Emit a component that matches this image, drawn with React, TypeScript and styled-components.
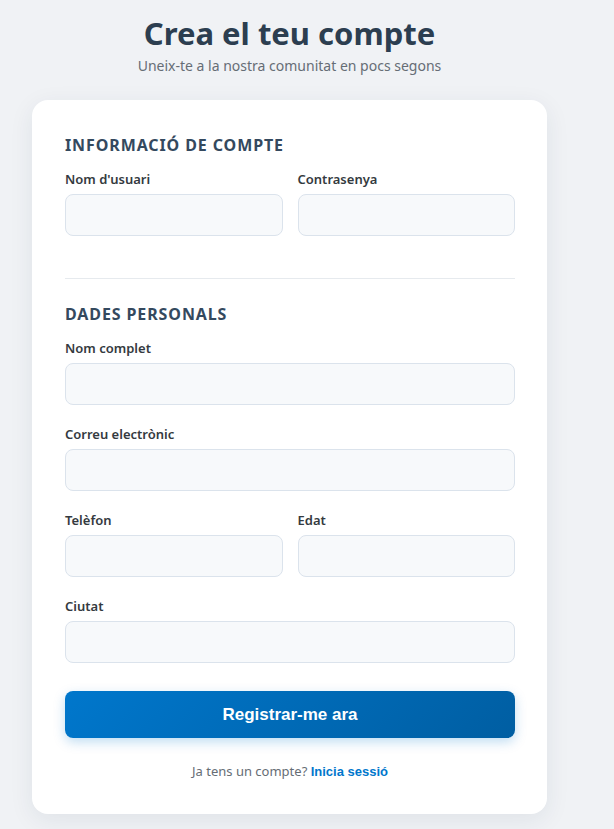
import React from "react"
import styled, { createGlobalStyle } from "styled-components"

const GlobalStyle = createGlobalStyle`
  body {
    margin: 0;
    background: #f0f2f5;
    font-family: "Noto Sans", "Open Sans", sans-serif;
  }
`

const Page = styled.div`
  width: 515px;
  margin: 0 32px;
  padding: 12px 0 16px;
`

const Header = styled.header`
  text-align: center;
  margin-bottom: 24px;
`

const Title = styled.h1`
  margin: 0;
  font-size: 31px;
  line-height: 42px;
  font-weight: 700;
  color: #2c3e50;
`

const Subtitle = styled.p`
  margin: 2px 0 0;
  font-size: 14px;
  line-height: 20px;
  color: #666d75;
`

const Card = styled.form`
  background: #fff;
  border-radius: 16px;
  padding: 34px 32px 33px 33px;
  box-shadow: 0 6px 24px rgba(30, 50, 80, 0.08);
`

const Section = styled.section<{ $divider?: boolean }>`
  padding-bottom: ${(p) => (p.$divider ? "42px" : "0")};
  margin-bottom: ${(p) => (p.$divider ? "24px" : "0")};
  border-bottom: ${(p) => (p.$divider ? "1px solid #e6eaee" : "none")};
`

const SectionTitle = styled.h2`
  margin: 0 0 14px;
  font-size: 16px;
  line-height: 22px;
  font-weight: 700;
  letter-spacing: 0.9px;
  text-transform: uppercase;
  color: #34495e;
`

const Row = styled.div<{ $flush?: boolean }>`
  display: grid;
  grid-template-columns: 1fr 1fr;
  gap: 15px;
  margin-bottom: ${(p) => (p.$flush ? "0" : "20px")};
`

const Field = styled.div<{ $last?: boolean }>`
  display: flex;
  flex-direction: column;
  margin-bottom: ${(p) => (p.$last ? "0" : "20px")};

  ${Row} & {
    margin-bottom: 0;
  }
`

const Label = styled.label`
  font-size: 13px;
  line-height: 18px;
  font-weight: 600;
  color: #343a40;
  margin-bottom: 6px;
`

const Input = styled.input`
  box-sizing: border-box;
  height: 42px;
  width: 100%;
  border: 1px solid #dbe3ec;
  border-radius: 8px;
  background: #f7f9fb;
  padding: 0 12px;
  font: inherit;
  font-size: 14px;
  outline: none;
`

const Submit = styled.button`
  display: block;
  width: 100%;
  height: 47px;
  margin-top: 28px;
  border: none;
  border-radius: 8px;
  background: linear-gradient(135deg, #0077cc 0%, #005ea2 100%);
  color: #fff;
  font-family: "Liberation Sans", Arial, sans-serif;
  font-size: 17px;
  font-weight: 700;
  box-shadow: 0 4px 12px rgba(0, 119, 204, 0.25);
  cursor: pointer;
`

const Footer = styled.p`
  margin: 24px 0 0;
  text-align: center;
  font-size: 13px;
  line-height: 18px;
  color: #666d75;
`

const Link = styled.a`
  color: #0077cc;
  font-weight: 700;
  font-family: "Liberation Sans", Arial, sans-serif;
  text-decoration: none;
`

export default function App() {
  return (
    <>
      <GlobalStyle />
      <Page>
        <Header>
          <Title>Crea el teu compte</Title>
          <Subtitle>Uneix-te a la nostra comunitat en pocs segons</Subtitle>
        </Header>
        <Card onSubmit={(e) => e.preventDefault()}>
          <Section $divider>
            <SectionTitle>Informació de compte</SectionTitle>
            <Row $flush>
              <Field>
                <Label>Nom d'usuari</Label>
                <Input type="text" />
              </Field>
              <Field>
                <Label>Contrasenya</Label>
                <Input type="password" />
              </Field>
            </Row>
          </Section>
          <Section>
            <SectionTitle>Dades personals</SectionTitle>
            <Field>
              <Label>Nom complet</Label>
              <Input type="text" />
            </Field>
            <Field>
              <Label>Correu electrònic</Label>
              <Input type="email" />
            </Field>
            <Row>
              <Field>
                <Label>Telèfon</Label>
                <Input type="tel" />
              </Field>
              <Field>
                <Label>Edat</Label>
                <Input type="number" />
              </Field>
            </Row>
            <Field $last>
              <Label>Ciutat</Label>
              <Input type="text" />
            </Field>
          </Section>
          <Submit type="submit">Registrar-me ara</Submit>
          <Footer>
            Ja tens un compte? <Link href="#">Inicia sessió</Link>
          </Footer>
        </Card>
      </Page>
    </>
  )
}
